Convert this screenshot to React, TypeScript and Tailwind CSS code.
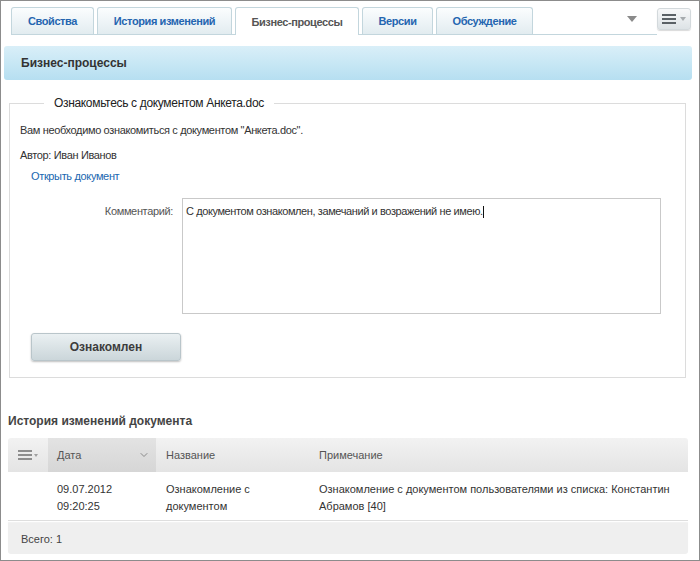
import { ChevronDown } from "lucide-react";

const tabs = [
  { label: "Свойства", w: "w-[83px]" },
  { label: "История изменений", w: "w-[135px]" },
  { label: "Бизнес-процессы", w: "w-[124px]", active: true },
  { label: "Версии", w: "w-[71px]" },
  { label: "Обсуждение", w: "w-[97px]" },
];

function MenuLines({ className = "" }: { className?: string }) {
  return (
    <svg width="14" height="10" viewBox="0 0 14 10" className={className}>
      <rect x="0" y="0" width="14" height="2" fill="currentColor" />
      <rect x="0" y="4" width="14" height="2" fill="currentColor" />
      <rect x="0" y="8" width="14" height="2" fill="currentColor" />
    </svg>
  );
}

export default function App() {
  return (
    <div className="w-[700px] h-[561px] border border-[#8c8c8c] bg-white overflow-hidden font-['Liberation_Sans',Arial,sans-serif] text-[11px] tracking-[-0.35px] leading-[18px] text-[#333]">
      {/* Tabs */}
      <div className="flex items-end justify-between pl-[10px] pr-[8px] pt-[6px]">
        <div className="flex items-end gap-[3px] border-b border-[#c3d6dd] flex-1 h-[28px]">
          {tabs.map((t) =>
            t.active ? (
              <div
                key={t.label}
                className={`${t.w} h-[28px] -mb-px bg-white border border-b-0 border-[#c3d6dd] rounded-t-[3px] flex items-center justify-center text-[11px] tracking-[-0.4px] font-bold text-[#555]`}
              >
                {t.label}
              </div>
            ) : (
              <div
                key={t.label}
                className={`${t.w} h-[27px] bg-gradient-to-b from-[#fbfdfe] to-[#e2ecf0] border border-b-0 border-[#c3d6dd] rounded-t-[3px] flex items-center justify-center text-[11px] tracking-[-0.4px] font-bold text-[#2465b0]`}
              >
                {t.label}
              </div>
            )
          )}
          <div className="flex-1 flex items-start justify-end h-full pt-[9px] pr-[20px]">
            <svg width="10" height="6" viewBox="0 0 10 6">
              <path d="M0 0 L10 0 L5 6 Z" fill="#8a8a8a" />
            </svg>
          </div>
        </div>
        <div className="self-start mt-[1px] w-[34px] h-[22px] rounded-[3px] border border-[#d3d9dc] bg-gradient-to-b from-[#f7f8f9] to-[#dde3e6] shadow-[0_1px_1px_rgba(0,0,0,0.15)] flex items-center justify-center gap-[4px] text-[#5a6166]">
          <MenuLines />
          <svg width="6" height="4" viewBox="0 0 6 4">
            <path d="M0 0 L6 0 L3 4 Z" fill="#a6abae" />
          </svg>
        </div>
      </div>

      {/* Blue header */}
      <div className="ml-[3px] mr-[7px] mt-[11px] h-[34px] rounded-[3px] bg-gradient-to-b from-[#d9eff8] to-[#b6dff1] flex items-center pl-[17px] text-[12px] tracking-normal font-bold text-[#333]">
        Бизнес-процессы
      </div>

      {/* Fieldset */}
      <fieldset className="ml-[8px] mr-[13px] mt-[14px] border border-[#dcdcdc] px-[10px] pb-[16px]">
        <legend className="ml-[24px] px-[10px] text-[12px] tracking-[-0.33px] text-[#222]">
          Ознакомьтесь с документом Анкета.doc
        </legend>
        <p className="mt-[9px]">Вам необходимо ознакомиться с документом "Анкета.doc".</p>
        <p className="mt-[7px]">Автор: Иван Иванов</p>
        <a className="block mt-[3px] ml-[11px] text-[#2067b0]">Открыть документ</a>
        <div className="flex mt-[13px]">
          <div className="w-[162px] text-right pr-[9px] pt-[4px] text-[#555]">Комментарий:</div>
          <div className="w-[479px] h-[116px] border border-[#c9c9c9] px-[3px] pt-[3px] tracking-[-0.4px]">
            С документом ознакомлен, замечаний и возражений не имею.
            <span className="inline-block w-px h-[12px] bg-[#111] align-middle" />
          </div>
        </div>
        <button className="mt-[19px] ml-[11px] w-[150px] h-[28px] rounded-[3px] border border-[#b9c5ca] bg-gradient-to-b from-[#eaf0f2] to-[#cbd6da] shadow-[0_1px_2px_rgba(0,0,0,0.25)] text-[12px] tracking-normal font-bold text-[#3c3c3c]">
          Ознакомлен
        </button>
      </fieldset>

      {/* History */}
      <h2 className="mt-[34px] ml-[7px] text-[12px] tracking-normal font-bold text-[#444]">
        История изменений документа
      </h2>
      <div className="ml-[7px] mr-[11px] mt-[8px] tracking-normal">
        <div className="flex h-[34px] rounded-t-[3px] bg-gradient-to-b from-[#f2f2f2] to-[#e4e4e4] text-[#555] items-stretch">
          <div className="w-[40px] flex items-center justify-center gap-[2px] text-[#8e8e8e]">
            <MenuLines />
            <svg width="4" height="3" viewBox="0 0 4 3">
              <path d="M0 0 L4 0 L2 3 Z" fill="#a0a0a0" />
            </svg>
          </div>
          <div className="w-[108px] bg-gradient-to-b from-[#e3e3e3] to-[#d6d6d6] flex items-center justify-between pl-[9px] pr-[6px]">
            <span>Дата</span>
            <ChevronDown size={12} className="text-[#8a8a8a]" strokeWidth={2} />
          </div>
          <div className="w-[153px] flex items-center pl-[10px]">Название</div>
          <div className="flex-1 flex items-center pl-[10px]">Примечание</div>
        </div>
        <div className="flex pt-[9px] pb-[5px] leading-[17px] border-b border-[#dedede]">
          <div className="w-[40px]" />
          <div className="w-[108px] pl-[9px]">
            09.07.2012
            <br />
            09:20:25
          </div>
          <div className="w-[153px] pl-[10px]">
            Ознакомление с
            <br />
            документом
          </div>
          <div className="flex-1 pl-[10px]">
            Ознакомление с документом пользователями из списка: Константин Абрамов [40]
          </div>
        </div>
        <div className="mt-[2px] h-[31px] rounded-b-[3px] bg-[#efefef] shadow-[0_-1px_1px_rgba(0,0,0,0.06)] flex items-center pl-[13px] text-[#444]">
          Всего: 1
        </div>
      </div>
    </div>
  );
}
